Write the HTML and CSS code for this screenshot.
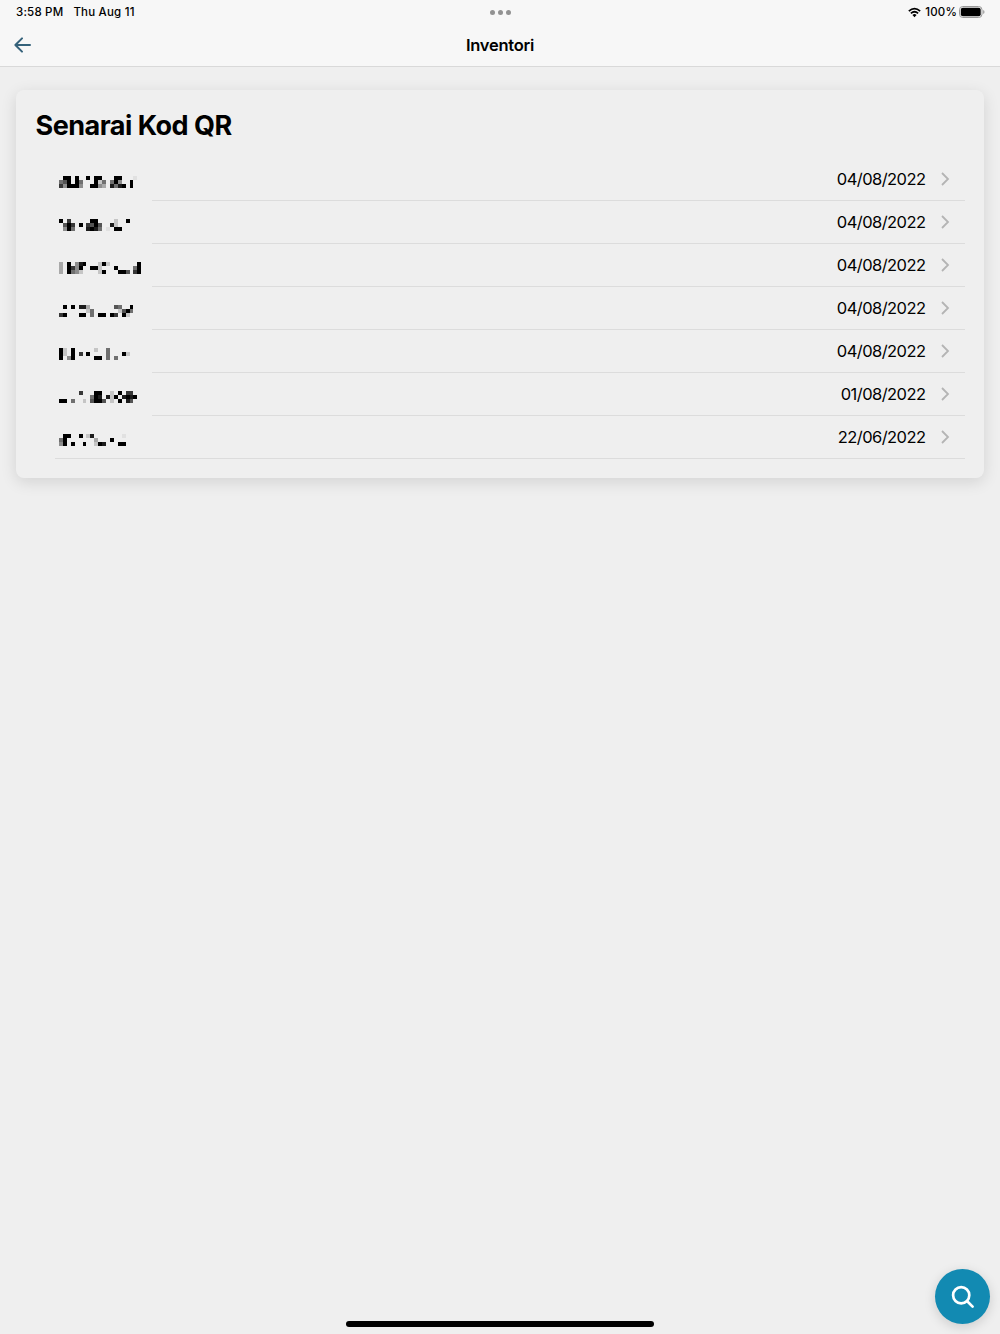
FILE: index.html
```html
<!DOCTYPE html>
<html lang="ms">
<head>
<meta charset="utf-8">
<title>Inventori</title>
<link rel="stylesheet" href="styles.css">
</head>
<body>
<header class="header">
  <div class="status">
    <div class="status-left"><span class="time">3:58 PM</span><span class="date">Thu Aug 11</span></div>
    <div class="dots"><i></i><i></i><i></i></div>
    <div class="status-right">
      <svg class="wifi" width="13" height="11" viewBox="0 0 14 11" fill="none" stroke="#000" stroke-width="1.9"><path d="M.9 4.1Q7-1.5 13.1 4.1M3.1 6.4Q7 3 10.9 6.4"/><path d="M4.8 8.1Q7 6.3 9.2 8.1L7 10.5Z" fill="#000" stroke="none"/></svg>
      <span class="percent">100%</span>
      <svg class="battery" width="26" height="12" viewBox="0 0 26 12"><rect x=".5" y=".5" width="22.5" height="11" rx="3.3" fill="none" stroke="#999"/><rect x="1.8" y="1.8" width="19.9" height="8.4" rx="2" fill="#000"/><path d="M24.2 4v4q1.3-.6 1.3-2t-1.3-2Z" fill="#999"/></svg>
    </div>
  </div>
  <nav class="navbar">
    <svg class="back" width="18" height="16" viewBox="0 0 18 16" fill="none" stroke="#35627a" stroke-width="2" stroke-linecap="round" stroke-linejoin="round"><path d="M16 8H1.6M8 1.4 1.4 8 8 14.6"/></svg>
    <h1 class="nav-title">Inventori</h1>
  </nav>
</header>
<main class="card">
  <h2 class="card-title">Senarai Kod QR</h2>
  <ul class="list" id="list"></ul>
</main>
<button class="search" aria-label="Cari"><svg width="26" height="26" viewBox="0 0 26 26" fill="none" stroke="#fff" stroke-width="2.7" stroke-linecap="round"><circle cx="11.2" cy="11.2" r="8.1"/><path d="m17.2 17.2 5.4 5.4"/></svg></button>
<div class="home-bar"></div>
<script src="list.js"></script>
</body>
</html>
```
FILE: styles.css
```css
* { box-sizing: border-box; }
body {
  margin: 0;
  height: 1334px;
  overflow: hidden;
  background: #efefef;
  color: #000;
  font-family: Inter, "Liberation Sans", sans-serif;
}
.header { height: 67px; background: #f7f7f7; border-bottom: 1px solid #d9d9d9; }
.status {
  display: grid;
  grid-template-columns: 1fr auto 1fr;
  align-items: center;
  height: 24px;
  padding: 0 15px 0 16px;
  font-size: 11.5px;
  font-weight: 500;
  letter-spacing: .2px;
}
.status-left { display: flex; gap: 10px; }
.dots { display: flex; gap: 2.7px; padding-top: 1px; }
.dots i { width: 5px; height: 5px; border-radius: 50%; background: #929292; }
.status-right { display: flex; align-items: center; justify-content: flex-end; }
.wifi { margin-right: 4px; }
.battery { margin-left: 2px; }
.navbar {
  display: grid;
  grid-template-columns: 1fr auto 1fr;
  align-items: center;
  height: 42px;
  padding: 0 14px;
}
.nav-title { margin: 0; font-size: 16.5px; font-weight: 600; letter-spacing: -.25px; }
.card {
  height: 387.5px;
  margin: 23px 16px 0;
  padding: 18px 19px 0;
  border-radius: 8px;
  background: #efefef;
  box-shadow: 0 4px 16px rgba(0, 0, 0, .12);
}
.card-title { margin: 0; padding-left: .6px; font-size: 27px; line-height: 35px; font-weight: 700; letter-spacing: -.52px; }
.list { margin: 15px 0 0; padding: 0 0 0 20px; list-style: none; }
.item { display: flex; height: 43px; }
.code { flex: 0 0 97px; padding: 17.7px 0 0 3.7px; }
.code svg { display: block; }
.detail {
  display: flex;
  flex: 1;
  align-items: center;
  justify-content: flex-end;
  gap: 15.5px;
  padding-right: 15px;
  border-bottom: 1px solid #dcdcdc;
}
.item:last-child { border-bottom: 1px solid #dcdcdc; }
.item:last-child .detail { border-bottom-color: transparent; margin-bottom: -1px; }
.date-value { font-size: 16.5px; line-height: 20px; letter-spacing: -.55px; }
.search {
  position: absolute;
  left: 935px;
  top: 1269px;
  display: flex;
  align-items: center;
  justify-content: center;
  width: 55px;
  height: 55px;
  padding: 0;
  border: 0;
  border-radius: 50%;
  background: #128ab2;
  box-shadow: 0 3px 12px rgba(0, 0, 0, .15);
}
.home-bar {
  position: absolute;
  left: 346px;
  top: 1321px;
  width: 308px;
  height: 5.5px;
  border-radius: 3px;
  background: #000;
}
```
FILE: list.js
```js
// Each redacted code is a mosaic of three rows; digits give the darkness of a cell.
const entries = [
  ["04/08/2022", [".99.9..9.99...99...1", "569.95...925.594..9.", "749994..9943.8589.9."]],
  ["04/08/2022", ["9.7.....99....2..9", ".697.9.7696..82...", ".495...8985.1.99.."]],
  ["04/08/2022", ["3.9.489...292.......9", "3.9749..992...9....59", "3.9542....29...996.79"]],
  ["04/08/2022", [".9.9.883......65..9", ".......25......2695", "79...99.5.99.97.92."]],
  ["04/08/2022", ["92.9.....2..5.....", "92.9.7.9....5...92", "9.49.....99.5.5..."]],
  ["01/08/2022", [".....7...99..2.9.77.", "........598.829.8989", "99.5..2.6996.2.9.86."]],
  ["22/06/2022", [".99..9.28.......1", "59.......3...9...", "49.9..9..298...99"]]
];
const W = 3.92, H = 4;

function mosaic(rows) {
  let cells = "";
  rows.forEach((row, y) => [...row].forEach((level, x) => {
    if (level === ".") return;
    const tone = Math.round(239 * (1 - (level - .5) / 8.5));
    cells += `<rect x="${x * W}" y="${y * H}" width="${W}" height="${H}" fill="rgb(${tone},${tone},${tone})"/>`;
  }));
  return `<svg width="88" height="12" shape-rendering="crispEdges">${cells}</svg>`;
}

document.getElementById("list").innerHTML = entries.map(([date, rows]) => `
  <li class="item">
    <div class="code">${mosaic(rows)}</div>
    <div class="detail">
      <span class="date-value">${date}</span>
      <svg width="9" height="14" viewBox="0 0 9 14" fill="none" stroke="#b4b4b4" stroke-width="1.8"><path d="m1 1 6 6-6 6"/></svg>
    </div>
  </li>`).join("");
```
